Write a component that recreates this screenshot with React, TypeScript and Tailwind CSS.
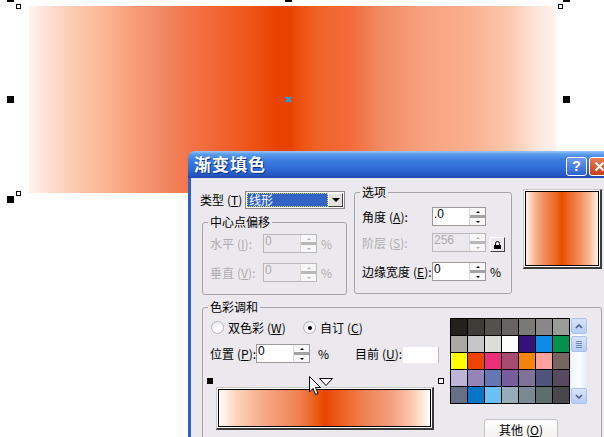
import React from "react";

const swatches = [
  "bg-[#22211c]", "bg-[#3d3c37]", "bg-[#54504c]", "bg-[#676360]", "bg-[#7a7a74]", "bg-[#898789]", "bg-[#9a9c98]",
  "bg-[#aaa9a3]", "bg-[#c6c5c7]", "bg-[#dcdddb]", "bg-[#fdfffd]", "bg-[#35127a]", "bg-[#0c8ce6]", "bg-[#02924e]",
  "bg-[#ffff00]", "bg-[#ec4308]", "bg-[#ec2d77]", "bg-[#a64c73]", "bg-[#f5840a]", "bg-[#fda0a0]", "bg-[#776660]",
  "bg-[#bdb5d8]", "bg-[#9484b8]", "bg-[#6676b3]", "bg-[#765d9c]", "bg-[#7e7397]", "bg-[#4e547c]", "bg-[#574a60]",
  "bg-[#666f86]", "bg-[#0576c6]", "bg-[#68c0f3]", "bg-[#96acb9]", "bg-[#7a8a92]", "bg-[#5d6d6b]", "bg-[#48484c]",
];

// mnemonic key, e.g. (T)
const Key = ({ k }: { k: string }) => (
  <span className="ml-[3px]">
    (<span className="underline">{k}</span>)
  </span>
);

const Group = ({
  title,
  className,
  children,
}: {
  title: string;
  className: string;
  children?: React.ReactNode;
}) => (
  <div className={`relative rounded-[3px] border border-[#a6a6a6] ${className}`}>
    <span className="absolute -top-[8px] left-[5px] bg-[#ebe9ed] px-[2px] text-[12px] leading-[14px] text-black">
      {title}
    </span>
    {children}
  </div>
);

const Spin = ({ value, disabled }: { value: string; disabled?: boolean }) => (
  <div
    className={`flex h-[19px] w-[54px] shrink-0 border ${
      disabled ? "border-[#b9b9b9] bg-[#ebe9ed] text-[#ababab]" : "border-[#9a9a9a] bg-white text-black"
    }`}
  >
    <span className="flex-1 pl-[1px] font-['Liberation_Sans',sans-serif] text-[12px] leading-[13px]">{value}</span>
    <div className="flex w-[16px] flex-col border-l border-[#d8d8d8]">
      <div className="flex h-[7px] items-center justify-center bg-[#f7f7f7]">
        <div
          className={`h-0 w-0 border-x-[2px] border-b-[2px] border-x-transparent ${
            disabled ? "border-b-[#b0b0b0]" : "border-b-black"
          }`}
        />
      </div>
      <div className={`h-[3px] ${disabled ? "bg-[#b8b8b8]" : "bg-[#a3a3a3]"}`} />
      <div className="flex h-[7px] items-center justify-center bg-[#f7f7f7]">
        <div
          className={`h-0 w-0 border-x-[2px] border-t-[2px] border-x-transparent ${
            disabled ? "border-t-[#b0b0b0]" : "border-t-black"
          }`}
        />
      </div>
    </div>
  </div>
);

const Radio = ({ checked }: { checked?: boolean }) => (
  <div className="flex h-[13px] w-[13px] items-center justify-center rounded-full border border-[#b4b4b4] bg-[linear-gradient(135deg,#e4e4e4,#ffffff_60%)]">
    {checked && <div className="h-[4px] w-[4px] rounded-full bg-black" />}
  </div>
);

const Handle = ({ className }: { className: string }) => (
  <div className={`absolute h-[7px] w-[7px] bg-black ${className}`} />
);
const Hollow = ({ className }: { className: string }) => (
  <div className={`absolute h-[5px] w-[5px] border border-black bg-white ${className}`} />
);

export default function App() {
  return (
    <div className="relative h-[437px] w-[604px] overflow-hidden bg-white font-['Noto_Sans_CJK_SC',sans-serif]">
      {/* object on the canvas */}
      <div className="absolute left-[29px] top-[6px] h-[187px] w-[527px] bg-[linear-gradient(to_right,#fdf5f0_0%,#fde8e0_2%,#fccdb3_8%,#fcb898_13.5%,#f9a07c_19%,#ef8b65_25%,#f47448_30.5%,#f26434_36%,#ee5518_42%,#e84300_46.7%,#e84300_49.5%,#ee5010_51.4%,#f06328_55%,#f36b3c_61%,#f08a62_66.6%,#f7a07c_74%,#fbb090_83.7%,#fcc8ac_91%,#fde8e0_97%,#fdf3ee_100%)]" />

      <Handle className="left-[7px] -top-[5px]" />
      <Handle className="left-[285px] -top-[5px]" />
      <Handle className="left-[563px] -top-[5px]" />
      <Handle className="left-[7px] top-[96px]" />
      <Handle className="left-[563px] top-[96px]" />
      <Handle className="left-[7px] top-[196px]" />
      <Hollow className="left-[16px] top-[4px]" />
      <Hollow className="left-[16px] top-[191px]" />
      <Hollow className="left-[558px] top-[4px]" />

      <svg className="absolute left-[285px] top-[96px]" width="7" height="7" viewBox="0 0 7 7">
        <path d="M1 1 L6 6 M6 1 L1 6" stroke="#1aa3e6" strokeWidth="2" />
      </svg>

      {/* dialog window */}
      <div className="absolute left-[188px] top-[151px] flex w-[424px] flex-col">
        <div className="flex h-[27px] rounded-tl-[7px] bg-[linear-gradient(to_bottom,#9cc4f6_0%,#5a9bea_12%,#3b7de0_35%,#2f6cd6_65%,#2456c2_90%,#1d48a8_100%)] pl-[6px]">
          <span className="mt-[3px] text-[17px] font-bold leading-[20px] tracking-[1px] text-white [text-shadow:1px_1px_0_#0f2d7a]">
            渐变填色
          </span>
          <div className="ml-auto mr-[2px] mt-[6px] flex gap-[2px]">
            <div className="flex h-[19px] w-[21px] items-center justify-center rounded-[3px] border border-white bg-[linear-gradient(to_bottom,#6d9cf0,#2e62d4)] font-['Liberation_Sans',sans-serif] text-[14px] font-bold text-white">
              ?
            </div>
            <div className="flex h-[19px] w-[21px] items-center justify-center rounded-[3px] border border-white bg-[linear-gradient(to_bottom,#ea7a52,#c8401c)]">
              <svg width="11" height="11" viewBox="0 0 11 11">
                <path d="M1.5 1.5 L9.5 9.5 M9.5 1.5 L1.5 9.5" stroke="white" strokeWidth="2" />
              </svg>
            </div>
          </div>
        </div>

        <div className="h-[290px] border-l-[3px] border-[#2d5fcf] bg-[#ebe9ed] pl-[9px] pt-[11px] text-[12px] leading-[14px] text-black">
          <div className="flex">
            {/* left column */}
            <div className="w-[147px]">
              <div className="mt-[2px] flex h-[18px] items-center">
                <span className="w-[45px] whitespace-nowrap">
                  类型<Key k="T" />
                </span>
                <div className="flex h-[18px] w-[100px] border border-[#8a8a8a] bg-white p-px">
                  <div className="flex flex-1 items-center border border-dotted border-[#e7cf5a] bg-[#3263c4] px-[1px] text-white">
                    线形
                  </div>
                  <div className="flex w-[15px] items-center justify-center border border-b-[#404040] border-l-white border-r-[#404040] border-t-white bg-[#e4e2e0]">
                    <div className="h-0 w-0 border-x-[4px] border-t-[4px] border-x-transparent border-t-black" />
                  </div>
                </div>
              </div>

              <Group title="中心点偏移" className="ml-[2px] mt-[13px] h-[73px] w-[145px]">
                <div className="flex flex-col gap-[10px] pl-[7px] pt-[11px] text-[#adadad]">
                  <div className="flex h-[19px] items-center">
                    <span className="w-[53px] shrink-0 whitespace-nowrap">
                      水平<Key k="I" />:
                    </span>
                    <Spin value="0" disabled />
                    <span className="ml-[4px]">%</span>
                  </div>
                  <div className="flex h-[19px] items-center">
                    <span className="w-[53px] shrink-0 whitespace-nowrap">
                      垂直<Key k="V" />:
                    </span>
                    <Spin value="0" disabled />
                    <span className="ml-[4px]">%</span>
                  </div>
                </div>
              </Group>
            </div>

            {/* options */}
            <Group title="选项" className="ml-[7px] mt-[3px] h-[102px] w-[158px]">
              <div className="flex flex-col pl-[7px] pt-[14px]">
                <div className="flex h-[19px] items-center">
                  <span className="w-[70px] shrink-0 whitespace-nowrap">
                    角度<Key k="A" />:
                  </span>
                  <Spin value=".0" />
                </div>
                <div className="mt-[7px] flex h-[19px] items-center text-[#adadad]">
                  <span className="w-[70px] shrink-0 whitespace-nowrap">
                    阶层<Key k="S" />:
                  </span>
                  <Spin value="256" disabled />
                  <div className="ml-[4px] mt-[4px] flex h-[15px] w-[15px] items-center justify-center border border-b-[#404040] border-l-white border-r-[#404040] border-t-white bg-[#ebe9ed]">
                    <svg width="7" height="8" viewBox="0 0 7 8">
                      <path d="M1.5 4 V2.5 a2 2 0 0 1 4 0 V4" stroke="black" fill="none" />
                      <rect x="0" y="4" width="7" height="4" fill="black" />
                    </svg>
                  </div>
                </div>
                <div className="mt-[10px] flex h-[19px] items-center">
                  <span className="w-[70px] shrink-0 whitespace-nowrap">
                    边缘宽度<Key k="E" />:
                  </span>
                  <Spin value="0" />
                  <span className="ml-[4px]">%</span>
                </div>
              </div>
            </Group>

            {/* preview */}
            <div className="ml-[11px] h-[80px] w-[79px] border-b-2 border-l border-r-2 border-t border-b-[#3a3a3a] border-l-[#c8c8c8] border-r-[#3a3a3a] border-t-[#c8c8c8] bg-white p-px">
              <div className="h-full w-full border border-black bg-[linear-gradient(to_right,#fff2ea_0%,#f8b898_12%,#f28a58_26%,#ee6a28_40%,#e84c00_50%,#ee6a28_60%,#f28a58_74%,#f8b898_88%,#fff2ea_100%)]" />
            </div>
          </div>

          {/* colour blend */}
          <Group title="色彩调和" className="ml-[2px] mt-[12px] h-[150px] w-[400px]">
            <div className="flex">
              <div className="w-[247px]">
                <div className="mt-[13px] flex h-[13px] items-center pl-[8px]">
                  <div className="flex w-[92px] items-center">
                    <Radio />
                    <span className="ml-[4px] whitespace-nowrap">
                      双色彩<Key k="W" />
                    </span>
                  </div>
                  <Radio checked />
                  <span className="ml-[4px] whitespace-nowrap">
                    自订<Key k="C" />
                  </span>
                </div>

                <div className="mt-[10px] flex h-[19px] items-center pl-[7px]">
                  <span className="w-[46px] shrink-0 whitespace-nowrap">
                    位置<Key k="P" />:
                  </span>
                  <Spin value="0" />
                  <span className="ml-[8px] w-[37px] shrink-0">%</span>
                  <span className="w-[48px] shrink-0 whitespace-nowrap">
                    目前<Key k="U" />:
                  </span>
                  <div className="mt-[3px] h-[16px] w-[36px] shrink-0 self-start border-r border-[#b8b8b8] bg-white" />
                </div>

                <div className="relative mt-[15px] h-[9px]">
                  <div className="absolute left-[4px] top-0 h-[6px] w-[6px] bg-black" />
                  <svg className="absolute left-[116px] top-0" width="14" height="8" viewBox="0 0 14 8">
                    <path d="M0.5 0.5 H13.5 L7 7.5 Z" fill="white" stroke="black" />
                  </svg>
                  <div className="absolute left-[235px] top-0 h-[6px] w-[6px] border border-black bg-white" />
                </div>

                <div className="ml-[13px] h-[43px] w-[218px] border-b-2 border-l border-r-2 border-t border-b-[#3a3a3a] border-l-[#c8c8c8] border-r-[#3a3a3a] border-t-[#c8c8c8] bg-white p-px">
                  <div className="h-full w-full border border-black bg-[linear-gradient(to_right,#ffffff_0%,#fdd4bc_8%,#f4a884_22%,#f08050_38%,#e85a10_47%,#e84400_50%,#ee6020_58%,#f08050_68%,#f4a080_82%,#fdd0b8_93%,#ffffff_100%)]" />
                </div>
              </div>

              <div>
                <div className="mt-[10px] flex">
                  <div className="grid grid-cols-7 gap-px bg-black p-px">
                    {swatches.map((c, i) => (
                      <div key={i} className={`h-[16px] w-[16px] ${c}`} />
                    ))}
                  </div>
                  <div className="ml-px flex h-[86px] w-[16px] flex-col bg-[linear-gradient(to_right,#eef3fd,#fbfdff_50%,#e4ecfb)]">
                    <div className="flex h-[16px] items-center justify-center rounded-[2px] border border-[#a9c0ec] bg-[linear-gradient(to_bottom,#d7e4fb,#b8cdf5)]">
                      <svg width="8" height="5" viewBox="0 0 8 5">
                        <path d="M1 4 L4 1 L7 4" stroke="#4d6185" strokeWidth="1.6" fill="none" />
                      </svg>
                    </div>
                    <div className="mt-[2px] flex h-[16px] flex-col items-center justify-center gap-[1px] rounded-[2px] border border-[#a9c0ec] bg-[linear-gradient(to_bottom,#d7e4fb,#b8cdf5)]">
                      <div className="h-px w-[6px] bg-[#6e84b0]" />
                      <div className="h-px w-[6px] bg-[#6e84b0]" />
                      <div className="h-px w-[6px] bg-[#6e84b0]" />
                      <div className="h-px w-[6px] bg-[#6e84b0]" />
                    </div>
                    <div className="mt-auto flex h-[16px] items-center justify-center rounded-[2px] border border-[#a9c0ec] bg-[linear-gradient(to_bottom,#d7e4fb,#b8cdf5)]">
                      <svg width="8" height="5" viewBox="0 0 8 5">
                        <path d="M1 1 L4 4 L7 1" stroke="#4d6185" strokeWidth="1.6" fill="none" />
                      </svg>
                    </div>
                  </div>
                </div>
                <div className="ml-[34px] mt-[15px] flex h-[22px] w-[74px] items-center justify-center rounded-[3px] border border-[#c4c4c4] bg-[linear-gradient(to_bottom,#ffffff,#f0efec)] whitespace-nowrap">
                  其他<Key k="O" />
                </div>
              </div>
            </div>
          </Group>
        </div>
      </div>

      {/* mouse pointer */}
      <svg className="absolute left-[309px] top-[376px]" width="13" height="20" viewBox="0 0 13 20">
        <path
          d="M0.5 0.5 L0.5 16 L4 12.5 L6.5 18.5 L9 17.5 L6.5 11.5 L11.5 11.5 Z"
          fill="white"
          stroke="black"
          strokeLinejoin="round"
        />
      </svg>
    </div>
  );
}
